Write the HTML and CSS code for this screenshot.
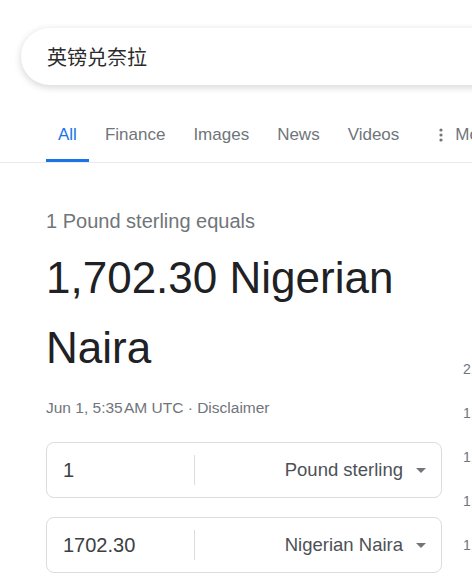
FILE: index.html
```html
<!DOCTYPE html>
<html lang="en">
<head>
    <meta charset="UTF-8">
    <meta name="viewport" content="width=device-width, initial-scale=1.0">
    <title>英镑兑奈拉 - Search</title>
    <link rel="stylesheet" href="styles.css">
</head>
<body>

<!-- Search box -->
<div class="search-box">
    <span class="query">英镑兑奈拉</span>
</div>

<!-- Tabs -->
<nav class="tabs">
    <a class="tab active" href="#">All</a>
    <a class="tab" href="#">Finance</a>
    <a class="tab" href="#">Images</a>
    <a class="tab" href="#">News</a>
    <a class="tab" href="#">Videos</a>
    <a class="tab more" href="#">
        <svg class="dots" width="6" height="16" viewBox="0 0 6 16">
            <circle cx="3" cy="3" r="1.6" fill="#70757a"/>
            <circle cx="3" cy="8" r="1.6" fill="#70757a"/>
            <circle cx="3" cy="13" r="1.6" fill="#70757a"/>
        </svg>
        More
    </a>
</nav>

<div class="result">
    <div class="converter">
        <div class="equals">1 Pound sterling equals</div>
        <div class="amount">1,702.30 Nigerian Naira</div>
        <div class="meta">Jun 1, 5:35&#8202;AM UTC · Disclaimer</div>

        <!-- Currency boxes -->
        <div class="currency-box">
            <div class="value">1</div>
            <div class="unit">Pound sterling <span class="caret"></span></div>
        </div>
        <div class="currency-box">
            <div class="value">1702.30</div>
            <div class="unit">Nigerian Naira <span class="caret"></span></div>
        </div>
    </div>

    <!-- Chart axis (cut off by the window) -->
    <div class="axis">
        <span>2,000</span>
        <span>1,800</span>
        <span>1,600</span>
        <span>1,400</span>
        <span>1,200</span>
    </div>
</div>

</body>
</html>
```

FILE: styles.css
```css
html, body {
    overflow: hidden;
}
body {
    font-family: "Liberation Sans", Arial, sans-serif;
    background-color: #fff;
    color: #202124;
    margin: 0;
    padding: 0;
}
.search-box {
    margin: 28px 0 0 21px;
    width: 520px;
    height: 57px;
    border-radius: 29px;
    background: #fff;
    box-shadow: 0 2px 6px 1px rgba(64, 60, 67, 0.18);
    display: flex;
    align-items: center;
    padding-left: 26px;
    box-sizing: border-box;
}
.query {
    font-family: "Noto Sans CJK SC", sans-serif;
    font-size: 20px;
    color: #2b2b2b;
}
.tabs {
    display: flex;
    margin-top: 27px;
    padding-left: 46px;
    border-bottom: 1px solid #ebebeb;
    white-space: nowrap;
}
.tab {
    display: flex;
    align-items: center;
    padding: 12px 12px 13px;
    margin-right: 4px;
    line-height: 22px;
    font-size: 17px;
    color: #70757a;
    text-decoration: none;
    border-bottom: 3px solid transparent;
}
.tab.active {
    color: #1a73e8;
    border-bottom-color: #1a73e8;
}
.tab.more {
    padding-left: 23px;
}
.dots {
    margin-right: 11px;
}
.result {
    display: flex;
    margin-top: 46px;
}
.converter {
    width: 396px;
    margin-left: 46px;
    flex-shrink: 0;
}
.equals {
    font-size: 20px;
    line-height: 24px;
    color: #70757a;
}
.amount {
    margin-top: 10px;
    font-size: 44px;
    line-height: 70px;
    color: #202124;
}
.meta {
    margin-top: 15px;
    font-size: 15.5px;
    line-height: 20px;
    color: #70757a;
}
.currency-box {
    display: flex;
    align-items: center;
    height: 56px;
    box-sizing: border-box;
    border: 1px solid #dadce0;
    border-radius: 8px;
    margin-top: 24px;
}
.currency-box + .currency-box {
    margin-top: 19px;
}
.value {
    width: 148px;
    box-sizing: border-box;
    padding-left: 16px;
    font-size: 20px;
    line-height: 30px;
    color: #3c4043;
    border-right: 1px solid #dadce0;
}
.unit {
    flex: 1;
    text-align: right;
    padding-right: 15px;
    font-size: 18.5px;
    color: #4d5156;
    display: flex;
    justify-content: flex-end;
    align-items: center;
}
.caret {
    margin-left: 13px;
    width: 0;
    height: 0;
    border-left: 5px solid transparent;
    border-right: 5px solid transparent;
    border-top: 5px solid #70757a;
}
.axis {
    display: flex;
    flex-direction: column;
    gap: 24px;
    margin-left: 21px;
    padding-top: 150px;
    font-size: 14px;
    line-height: 20px;
    color: #70757a;
    white-space: nowrap;
}
```
